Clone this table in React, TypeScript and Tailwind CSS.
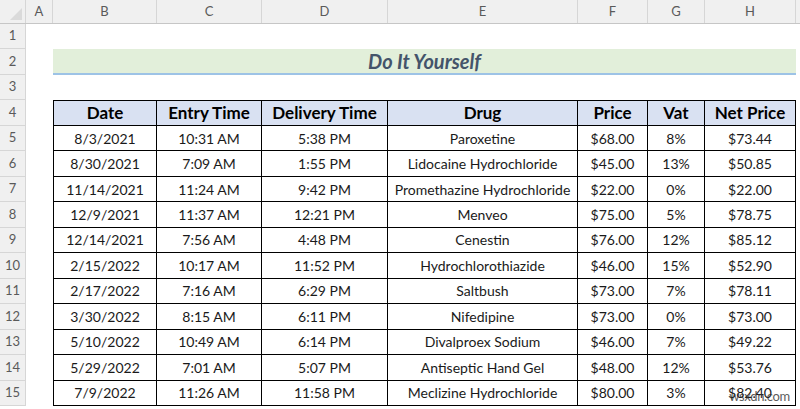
import React from "react";

const cols = ["A", "B", "C", "D", "E", "F", "G", "H"];
const widths = ["w-[27px]", "w-[104px]", "w-[105px]", "w-[126px]", "w-[190px]", "w-[70px]", "w-[57px]", "w-[91px]"];

const headers = ["Date", "Entry Time", "Delivery Time", "Drug", "Price", "Vat", "Net Price"];

const rows: string[][] = [
  ["8/3/2021", "10:31 AM", "5:38 PM", "Paroxetine", "$68.00", "8%", "$73.44"],
  ["8/30/2021", "7:09 AM", "1:55 PM", "Lidocaine Hydrochloride", "$45.00", "13%", "$50.85"],
  ["11/14/2021", "11:24 AM", "9:42 PM", "Promethazine Hydrochloride", "$22.00", "0%", "$22.00"],
  ["12/9/2021", "11:37 AM", "12:21 PM", "Menveo", "$75.00", "5%", "$78.75"],
  ["12/14/2021", "7:56 AM", "4:48 PM", "Cenestin", "$76.00", "12%", "$85.12"],
  ["2/15/2022", "10:17 AM", "11:52 PM", "Hydrochlorothiazide", "$46.00", "15%", "$52.90"],
  ["2/17/2022", "7:16 AM", "6:29 PM", "Saltbush", "$73.00", "7%", "$78.11"],
  ["3/30/2022", "8:15 AM", "6:11 PM", "Nifedipine", "$73.00", "0%", "$73.00"],
  ["5/10/2022", "10:49 AM", "6:14 PM", "Divalproex Sodium", "$46.00", "7%", "$49.22"],
  ["5/29/2022", "7:01 AM", "5:07 PM", "Antiseptic Hand Gel", "$48.00", "12%", "$53.76"],
  ["7/9/2022", "11:26 AM", "11:58 PM", "Meclizine Hydrochloride", "$80.00", "3%", "$82.40"],
];

function RowHead({ n }: { n: number }) {
  return (
    <div className="w-[26px] shrink-0 h-full flex items-center justify-center bg-[#f0f0f0] border-r border-b border-[#d6d6d6] text-[13px] text-[#5a5a5a]">
      {n}
    </div>
  );
}

function Row({ n, children }: { n: number; children?: React.ReactNode }) {
  return (
    <div className="flex h-[25.47px]">
      <RowHead n={n} />
      <div className="w-[27px] shrink-0" />
      {children}
    </div>
  );
}

export default function App() {
  return (
    <div className="relative w-[800px] h-[409px] overflow-hidden bg-white text-[#1a1a1a]" style={{ fontFamily: "Lato, 'Open Sans', sans-serif" }}>
      {/* column letters */}
      <div className="flex h-[24px] bg-[#f0f0f0] border-b border-[#c6c6c6]">
        <div className="w-[26px] shrink-0 relative border-r border-[#d6d6d6]">
          <div className="absolute right-[3px] bottom-[3px] w-0 h-0 border-l-[12px] border-l-transparent border-b-[12px] border-b-[#dadada]" />
        </div>
        {cols.map((c, i) => (
          <div key={c} className={`${widths[i]} shrink-0 flex items-center justify-center border-r border-[#d6d6d6] text-[13px] text-[#5a5a5a]`}>
            {c}
          </div>
        ))}
        <div className="flex-1" />
      </div>

      <Row n={1} />
      <Row n={2}>
        <div className="w-[743px] shrink-0 h-full bg-[#e2efda] border-b-2 border-[#9dc3e6] flex items-center justify-center text-[20px] font-bold italic text-[#44546a]">
          Do It Yourself
        </div>
      </Row>
      <Row n={3} />
      <Row n={4}>
        {headers.map((h, i) => (
          <div
            key={h}
            className={`${widths[i + 1]} shrink-0 h-full flex items-center justify-center bg-[#d9e1f2] border-t border-b border-r border-black ${i === 0 ? "border-l" : ""} text-[17px] font-bold text-black`}
          >
            {h}
          </div>
        ))}
      </Row>
      {rows.map((r, ri) => (
        <Row key={ri} n={ri + 5}>
          {r.map((v, i) => (
            <div
              key={i}
              className={`${widths[i + 1]} shrink-0 h-full flex items-center justify-center border-b border-r border-black ${i === 0 ? "border-l" : ""} text-[14px]`}
            >
              {v}
            </div>
          ))}
        </Row>
      ))}

      <div className="absolute right-[10px] bottom-[3px] text-[13px] text-[#333] opacity-80 tracking-tight">wsxdn.com</div>
    </div>
  );
}
